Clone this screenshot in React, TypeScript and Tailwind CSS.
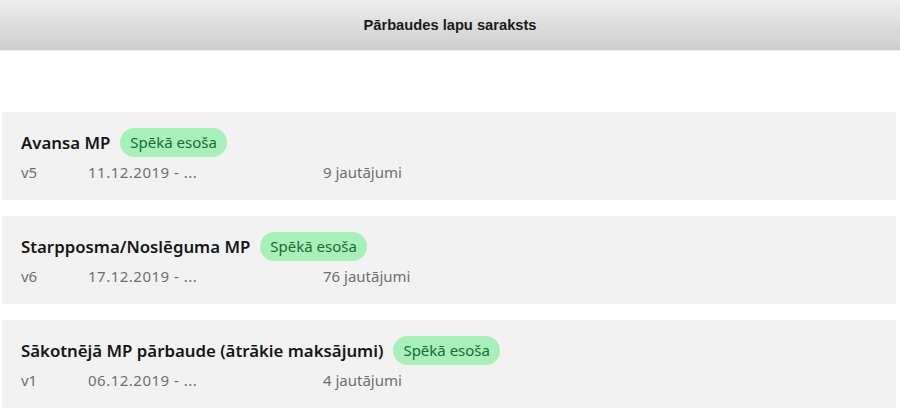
import React from "react";

const items = [
  { title: "Avansa MP", v: "v5", date: "11.12.2019 - ...", q: "9 jautājumi" },
  { title: "Starpposma/Noslēguma MP", v: "v6", date: "17.12.2019 - ...", q: "76 jautājumi" },
  { title: "Sākotnējā MP pārbaude (ātrākie maksājumi)", v: "v1", date: "06.12.2019 - ...", q: "4 jautājumi" },
];

export default function App() {
  return (
    <div className="w-[900px] h-[408px] overflow-hidden bg-white" style={{ fontFamily: '"Noto Sans", sans-serif' }}>
      <div className="h-[51px] flex items-center justify-center bg-gradient-to-b from-[#ededed] to-[#cecece] border-b border-[#eeeeee]">
        <span className="text-[14.7px] font-bold text-[#1a1a1a]" style={{ fontFamily: '"Liberation Sans", Arial, sans-serif' }}>
          Pārbaudes lapu saraksts
        </span>
      </div>
      <div className="ml-[2px] mr-[4px] mt-[61px] flex flex-col gap-[16px]">
        {items.map((it) => (
          <div key={it.title} className="bg-[#f2f2f2] h-[88px] px-[19px] pt-[16px]">
            <div className="flex items-center gap-[10px]">
              <span className="text-[16.8px] font-semibold text-[#161616] leading-[29px]">{it.title}</span>
              <span className="h-[29px] px-[10px] rounded-full bg-[#a7f0ba] text-[#1a6b33] text-[15px] flex items-center">
                Spēkā esoša
              </span>
            </div>
            <div className="flex text-[15px] text-[#6f6f6f] mt-[5px] leading-[20px]">
              <span className="w-[67px]">{it.v}</span>
              <span className="w-[235px] tracking-[0.5px]">{it.date}</span>
              <span>{it.q}</span>
            </div>
          </div>
        ))}
      </div>
    </div>
  );
}
